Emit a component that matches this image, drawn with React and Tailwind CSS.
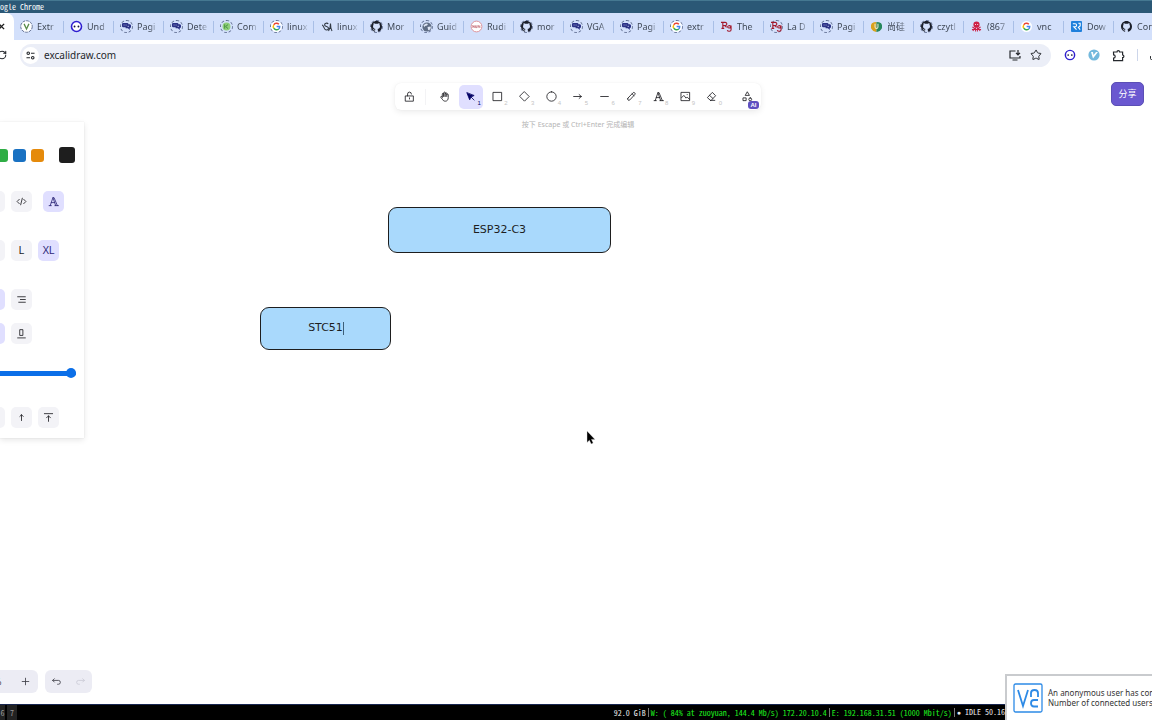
import clsx from "clsx";
import { BsGithub } from "react-icons/bs";
import { Star, Download, RotateCw } from "lucide-react";

const TABS = [
  { title: "Extr", icon: "v" },
  { title: "Und", icon: "eyes" },
  { title: "Pagi", icon: "chat", ring: true },
  { title: "Dete", icon: "chat", ring: true },
  { title: "Com", icon: "chip", ring: true },
  { title: "linux", icon: "google", ring: true },
  { title: "linux", icon: "script" },
  { title: "Mor", icon: "github", ring: true },
  { title: "Guid", icon: "globe", ring: true },
  { title: "Rudi", icon: "badge" },
  { title: "mor", icon: "github", ring: true },
  { title: "VGA", icon: "chat", ring: true },
  { title: "Pagi", icon: "chat", ring: true },
  { title: "extr", icon: "google", ring: true },
  { title: "The", icon: "pg" },
  { title: "La D", icon: "pg", ring: true },
  { title: "Pagi", icon: "chat", ring: true },
  { title: "尚硅", icon: "shield" },
  { title: "czytl", icon: "github", ring: true },
  { title: "(867", icon: "bug" },
  { title: "vnc", icon: "google" },
  { title: "Dow", icon: "down" },
  { title: "Com", icon: "github" },
];

const SANS = "font-['Noto_Sans','Noto_Sans_CJK_SC',sans-serif]";
const MONO = "font-['Noto_Sans_Mono_CJK_SC','Liberation_Mono',monospace]";

function Eyes({ className }) {
  return (
    <svg viewBox="0 0 14 14" className={className}>
      <circle cx="7" cy="7" r="5.4" fill="#fff" stroke="#2f1fd0" strokeWidth="1.7" />
      <circle cx="4.9" cy="7" r="1" fill="#14143c" />
      <circle cx="9.1" cy="7" r="1" fill="#14143c" />
    </svg>
  );
}

function Favicon({ name }) {
  switch (name) {
    case "v":
      return (
        <svg viewBox="0 0 14 14" className="size-[13px]">
          <circle cx="7" cy="7" r="6.2" fill="#fff" stroke="#5d6b8e" strokeDasharray="3 1" />
          <path d="M4.4 4.2 7 9.6l2.6-5.4" fill="none" stroke="#5a8c4a" strokeWidth="1.4" />
        </svg>
      );
    case "eyes":
      return <Eyes className="size-[13px]" />;
    case "chat":
      return (
        <svg viewBox="0 0 10 10" className="size-[9px]">
          <path d="M0 2.2Q0 1 1.4 1h4.4q1.4 0 1.4 1.4h1.6Q10 2.6 10 4v1.4Q10 7 8.6 7v1.8L6.6 7H4V5.8H1.4Q0 5.8 0 4.6Z" fill="#2b3185" />
          <path d="M1.8 3.4h1M4 3.4h1M6.2 4.8h1.6" stroke="#c9cef5" strokeWidth=".9" />
        </svg>
      );
    case "chip":
      return (
        <svg viewBox="0 0 10 10" className="size-[9px]">
          <circle cx="5" cy="5" r="4.4" fill="#8fcf7a" />
          <path d="M3 2.6v4.8M6.8 2.8 4 5l2.8 2.4" fill="none" stroke="#3f8a3a" strokeWidth="1" />
        </svg>
      );
    case "google":
      return (
        <svg viewBox="0 0 14 14" className="size-[11px]">
          <circle cx="7" cy="7" r="7" fill="#fff" />
          <g fill="none" strokeWidth="1.8">
            <path d="M3.5 4.9a4.1 4.1 0 0 1 6.5-.7" stroke="#ea4335" />
            <path d="M3.5 9.1a4.1 4.1 0 0 1 0-4.2" stroke="#fbbc05" />
            <path d="M9.8 10.1a4.1 4.1 0 0 1-6.3-1" stroke="#34a853" />
            <path d="M7.2 7h3.9a4.1 4.1 0 0 1-1.3 3.1" stroke="#4285f4" />
          </g>
        </svg>
      );
    case "script":
      return (
        <svg viewBox="0 0 12 12" className="size-3" fill="none" stroke="#303842" strokeWidth="1.1">
          <path d="M1 4c2 0 1.5 5 4.5 5 1.8 0 2.5-1.6 1.5-2.6C6 5.4 3.8 5.6 3.6 4 3.4 2.2 6.2 1.4 7.2 3M7.5 10c1.5-2 2-4 2-7.5 0 4 .3 5.5 1.5 7.5M8 7.5h2.5" />
        </svg>
      );
    case "github":
      return <BsGithub className="size-[11px] text-[#1b1f2a]" />;
    case "globe":
      return (
        <svg viewBox="0 0 10 10" className="size-[10px]">
          <circle cx="5" cy="5" r="4.6" fill="#5f6d84" />
          <path d="M1.5 3.2 4 1.5l2 .5-1 1.6-2 .4-.6 1.2ZM5.5 5l3-.6.4 1.6-1.8 2.4-1-.6Z" fill="#dfe6f5" />
        </svg>
      );
    case "badge":
      return (
        <svg viewBox="0 0 14 14" className="size-[13px]">
          <circle cx="7" cy="7" r="5.8" fill="#fff" stroke="#dc8d95" />
          <path d="M3 8.4V5.8l1.6 2.4V5.8M6 5.8v2.4h1.4V5.8M8.8 8.4V5.8l1.8 2.4V5.8" fill="none" stroke="#c0646e" strokeWidth=".8" />
        </svg>
      );
    case "pg":
      return (
        <svg viewBox="0 0 12 12" className="size-[11px]" fill="none" stroke="#a3182c" strokeWidth="1.2">
          <path d="M0 1.5h4.5c2.5 0 2.5 3.5 0 3.5H2M2 1.5v6M.5 8h3M4.5 5l1.5 2M11 6C9.5 4.5 7 5 7.2 6.6c.2 1.5 3.2 1.4 3.6-.4M11 5v4.5c0 2-3.5 2.2-4.2.5" />
        </svg>
      );
    case "shield":
      return (
        <svg viewBox="0 0 12 12" className="size-[11px]">
          <path d="M6 1v11A6 6 0 0 1 1 2.5Q3 1 6 1Z" fill="#d9a21c" />
          <path d="M6 1v11A6 6 0 0 0 11 2.5Q9 1 6 1Z" fill="#27875c" />
          <path d="M4.4 3v3.5a1.6 1.6 0 0 0 3.2 0V3" fill="none" stroke="#f3ead0" strokeWidth="1.1" />
        </svg>
      );
    case "bug":
      return (
        <svg viewBox="0 0 12 12" className="size-[11px]">
          <circle cx="6" cy="4" r="3.4" fill="#cf1f45" />
          <path d="M4.4 3.8h1M6.8 3.8h1" stroke="#fff" strokeWidth="1" />
          <path d="M1.5 6.5 4 8 2 11M10.5 6.5 8 8l2 3M5 7v4.5M7 7v4.5M1 9.2h10" fill="none" stroke="#cf1f45" strokeWidth="1.1" />
        </svg>
      );
    default:
      return (
        <svg viewBox="0 0 12 12" className="size-[11px]">
          <rect width="12" height="12" rx="1" fill="#1f80dc" />
          <path d="M2 3h2.5a1.5 1.5 0 0 1 0 3.2H3L6 9.5M8 2.5h2v3L8 7l2 2.5" fill="none" stroke="#fff" strokeWidth="1.2" />
        </svg>
      );
  }
}

function TabStrip() {
  return (
    <div className="flex h-[27px] shrink-0 overflow-hidden bg-[#d3e0fb]" role="tablist">
      <button className="w-[14px] shrink-0 rounded-tr-lg bg-white" role="tab" aria-selected="true" aria-label="Excalidraw">
        <svg viewBox="0 0 8 8" className="-ml-[2px] size-[7px] stroke-[#1f1f1f]" strokeWidth="1.5">
          <path d="M1 1l6 6M7 1L1 7" />
        </svg>
      </button>
      {TABS.map((tab, i) => (
        <button key={i} className="flex w-[50px] shrink-0 items-center gap-1 pl-[6px]" role="tab">
          <span
            className={clsx(
              "flex size-[13px] shrink-0 items-center justify-center rounded-full",
              tab.ring && "border border-dashed border-[#5d6b8e]"
            )}
          >
            <Favicon name={tab.icon} />
          </span>
          <span
            className={clsx(
              "w-[22px] overflow-hidden text-left text-[9px] whitespace-nowrap text-[#3f4856] [mask-image:linear-gradient(to_right,black_55%,transparent)]",
              SANS
            )}
          >
            {tab.title}
          </span>
          <span className="ml-auto h-3 w-px bg-[#a9bfe6]" />
        </button>
      ))}
    </div>
  );
}

function AddressBar() {
  return (
    <div className="flex h-[30px] shrink-0 items-center bg-white text-[#25282d]">
      <button className="-ml-[3px] w-[23px] shrink-0" aria-label="Reload">
        <RotateCw className="size-[10px]" strokeWidth={2.5} />
      </button>
      <div className="flex h-[23px] flex-1 items-center rounded-full bg-[#ebeef7] pr-[9px] pl-[2px]">
        <span className="flex size-[17px] items-center justify-center rounded-full bg-white">
          <svg viewBox="0 0 10 10" className="size-[9px]" fill="none" stroke="#25282d" strokeWidth="1.2">
            <circle cx="2.5" cy="2.5" r="1.4" />
            <path d="M5.5 2.5h4M.5 7.5h4" />
            <circle cx="7.5" cy="7.5" r="1.4" />
          </svg>
        </span>
        <input
          className={clsx("ml-[5px] min-w-0 flex-1 bg-transparent text-[10px] outline-none", SANS)}
          aria-label="Address"
          defaultValue="excalidraw.com"
        />
        <button aria-label="Install app">
          <svg viewBox="0 0 12 12" className="size-3" fill="none" stroke="#25282d" strokeWidth="1.2">
            <path d="M6.5 2H1v7h10V7M3.5 11h5M9 1v4.5M7 3.8l2 2 2-2" />
          </svg>
        </button>
        <button className="ml-[9px]" aria-label="Bookmark">
          <Star className="size-3" />
        </button>
      </div>
      <button className="ml-[13px]" aria-label="Extension">
        <Eyes className="size-3" />
      </button>
      <button className="ml-3" aria-label="Vimium">
        <svg viewBox="0 0 12 12" className="size-3">
          <circle cx="6" cy="6" r="5.6" fill="#74b9dd" />
          <path d="M3 3h2l.5 3L8 3h2L5 9.5Z" fill="#fff" />
        </svg>
      </button>
      <button className="ml-3" aria-label="Extensions">
        <svg viewBox="0 0 13 13" className="size-[13px]" fill="none" stroke="#25282d" strokeWidth="1.2">
          <path d="M1.5 3H5a1.3 1.3 0 0 1 2.6 0h3v3a1.3 1.3 0 0 1 0 2.6v3h-9V9a1.6 1.6 0 0 0 0-3.2Z" />
        </svg>
      </button>
      <span className="mr-[11px] ml-3 h-3 w-px bg-[#cdd6ea]" />
      <span className="w-[3px] overflow-hidden">
        <Download className="size-3" />
      </span>
    </div>
  );
}

const stroke = { fill: "none", stroke: "currentColor", strokeWidth: 1.5, strokeLinecap: "round", strokeLinejoin: "round" };

const FONT_ICON = "M2 17.5h4M4 17.5 9 3h2l6 14.5M9 3l5 14.5M6 12h6M12.5 17.5H19";

const TOOLS = [
  { label: "Hand", path: "M6 11V5.5a1.3 1.3 0 0 1 2.7 0V10M8.7 9.5V3.3a1.3 1.3 0 0 1 2.7 0V10M11.4 4.5a1.3 1.3 0 0 1 2.7 0V10M14.1 6.8a1.3 1.3 0 0 1 2.7 0V12c0 4-2 6.5-5.4 6.5-3 0-4.2-1.5-5.4-3.6L3.2 11.5c-.5-1.5 1-2.3 2-1.2L6 11.5" },
  { label: "Selection", key: "1", path: "M3.5 3.5l5 12.5 2.2-5L16 8.5Zm7.5 7.5 5.5 5.5", fill: true, active: true },
  { label: "Rectangle", key: "2", path: "M2.5 2.5h15v15h-15Z" },
  { label: "Diamond", key: "3", path: "M10 1.5l8.5 8.5-8.5 8.5L1.5 10Z" },
  { label: "Ellipse", key: "4", path: "M10 1.5a8.5 8.5 0 1 1 0 17 8.5 8.5 0 0 1 0-17Z" },
  { label: "Arrow", key: "5", path: "M3 10h14M13 6.5l4 3.5-4 3.5" },
  { label: "Line", key: "6", path: "M3 10h14" },
  { label: "Draw", key: "7", path: "M3.5 13 12.5 3.5a2.3 2.3 0 0 1 3.5 3L7 16.2a2.3 2.3 0 0 1-3.5-3.2ZM11 5l3.5 3.5" },
  { label: "Text", key: "8", path: FONT_ICON },
  { label: "Image", key: "9", path: "M2.5 2.5h15v15h-15ZM3 12l4-4 4 5 2-2 4 4M13 6.5h.1" },
  { label: "Eraser", key: "0", path: "M8 17 2.5 12l9-9.5 6 6L9.5 17ZM6.5 8l6 5.5M8 17h8" },
];

function Icon({ d, fill }) {
  return (
    <svg viewBox="0 0 20 20" className="size-[11px]" {...stroke} fill={fill ? "currentColor" : "none"}>
      <path d={d} />
    </svg>
  );
}

function Toolbar() {
  return (
    <div className="mt-[13px] flex h-[27px] w-[366px] items-center rounded-md bg-white px-[2px] text-[#1b1b1f] shadow-[0_2px_6px_rgba(0,0,0,0.08),0_0_1px_rgba(0,0,0,0.08)]">
      <button className="flex size-6 items-center justify-center" aria-label="Lock">
        <Icon d="M3 9h14v9.5H3ZM6.5 9V5.5a3.5 3.5 0 0 1 7 0M10 12.5v2" />
      </button>
      <span className="ml-1 h-4 w-px bg-[#f3f3f5]" />
      <div className="mr-[11px] ml-[6px] flex flex-1 justify-between">
        {TOOLS.map((tool) => (
          <button
            key={tool.label}
            aria-label={tool.label}
            className={clsx(
              "relative flex size-6 items-center justify-center rounded-[5px]",
              tool.active && "bg-[#e0dfff] text-[#030064]"
            )}
          >
            <Icon d={tool.path} fill={tool.fill} />
            {tool.key && (
              <span
                className={clsx(
                  "absolute right-[2px] bottom-[2px] font-['Liberation_Sans',sans-serif] text-[6px] leading-[8px]",
                  tool.active ? "text-[#030064]" : "text-[#c4c4c4]"
                )}
              >
                {tool.key}
              </span>
            )}
          </button>
        ))}
      </div>
      <button className="relative flex size-6 items-center justify-center" aria-label="More tools">
        <Icon d="M10 2l3.5 6h-7ZM2.5 12.5h5v5h-5ZM15 12.5a2.6 2.6 0 1 1 0 5.2 2.6 2.6 0 0 1 0-5.2Z" />
        <span className="absolute right-0 bottom-0 h-2 w-[11px] rounded-[3px] bg-[#5f50c0] text-center font-['Liberation_Sans',sans-serif] text-[6px] leading-[8px] font-bold text-white">
          AI
        </span>
      </button>
    </div>
  );
}

function PanelButton({ active, label, className, children }) {
  return (
    <button
      aria-label={label}
      className={clsx(
        "flex size-[21px] shrink-0 items-center justify-center rounded-[5px]",
        active ? "bg-[#e0dfff] text-[#2c2678]" : "bg-[#f3f3f7] text-[#1b1b1f]",
        className
      )}
    >
      {children}
    </button>
  );
}

function StylePanel() {
  return (
    <aside className="mt-[52px] overflow-hidden bg-white pt-[25px] pb-[10px] shadow-[0_2px_6px_rgba(0,0,0,0.1),0_0_1px_rgba(0,0,0,0.12)]">
      <div className="-ml-[5px] flex items-center gap-[5px]">
        <button className="size-[13px] rounded-[3px] bg-[#2fad45]" aria-label="Green" />
        <button className="size-[13px] rounded-[3px] bg-[#1971c2]" aria-label="Blue" />
        <button className="size-[13px] rounded-[3px] bg-[#e58a0b]" aria-label="Orange" />
        <button className="ml-[10px] size-4 rounded-[3px] bg-[#1e1e1e]" aria-label="Black" />
      </div>

      <div className="mt-7 -ml-4 flex gap-[6px]">
        <PanelButton label="Normal" />
        <PanelButton label="Code">
          <Icon d="M6 6l-4 4 4 4M14 6l4 4-4 4M11.5 4l-3 12" />
        </PanelButton>
        <PanelButton label="Font picker" active className="ml-[5px]">
          <Icon d={FONT_ICON} />
        </PanelButton>
      </div>

      <div className="mt-7 -ml-4 flex gap-[6px] font-['Liberation_Sans',sans-serif] text-[10px]">
        <PanelButton label="Medium" />
        <PanelButton label="Large">L</PanelButton>
        <PanelButton label="Extra large" active>XL</PanelButton>
      </div>

      <div className="mt-7 -ml-4 flex gap-[6px]">
        <PanelButton label="Center" active />
        <PanelButton label="Right">
          <Icon d="M3 5h14M8 10h9M5 15h12" />
        </PanelButton>
      </div>
      <div className="mt-[13px] -ml-4 flex gap-[6px]">
        <PanelButton label="Middle" active />
        <PanelButton label="Bottom">
          <Icon d="M3 18h14M7.5 3h5v10.5h-5Z" />
        </PanelButton>
      </div>

      <div className="mt-[22px] -ml-4 flex h-[14px] items-center">
        <input
          type="range"
          aria-label="Opacity"
          defaultValue={100}
          className="h-[5px] w-[92px] appearance-none rounded-full bg-[#0b6fe8] [&::-webkit-slider-thumb]:size-[10px] [&::-webkit-slider-thumb]:appearance-none [&::-webkit-slider-thumb]:rounded-full [&::-webkit-slider-thumb]:bg-[#0b6fe8]"
        />
      </div>

      <div className="mt-[27px] -ml-4 flex gap-[6px]">
        <PanelButton label="Send backward" />
        <PanelButton label="Bring forward">
          <Icon d="M10 15.5V5M7 8l3-3 3 3" />
        </PanelButton>
        <PanelButton label="Bring to front">
          <Icon d="M10 17V7M6.5 10.5 10 7l3.5 3.5M2.5 3h15" />
        </PanelButton>
      </div>
    </aside>
  );
}

function Drawing() {
  const box =
    "absolute flex items-center justify-center rounded-[9px] border border-[#1e1e1e] bg-[#a9d9fc] font-['DejaVu_Sans',sans-serif] text-[11px] text-[#1e1e1e]";
  return (
    <>
      <div className={clsx(box, "top-[137px] left-[388px] h-[46px] w-[223px]")}>ESP32-C3</div>
      <div className={clsx(box, "top-[237px] left-[260px] h-[43px] w-[131px]")}>
        <input className="w-9 bg-transparent text-center outline-none" aria-label="Shape text" defaultValue="STC51" />
        <span className="-ml-px h-[13px] w-px bg-[#3d5f78]" />
      </div>
      <svg viewBox="0 0 10 15" className="absolute top-[360px] left-[586px] h-[15px] w-[10px]">
        <path d="M1 1v11.5l2.4-2.3L5.2 14l2-1-1.7-3.6H9Z" fill="#000" stroke="#ddd" strokeWidth=".4" />
      </svg>
    </>
  );
}

function Canvas() {
  return (
    <main className={clsx("relative flex flex-1 flex-col justify-between overflow-hidden bg-white", SANS)}>
      <Drawing />
      <div className="grid grid-cols-[84px_1fr_80px] items-start">
        <StylePanel />
        <div className="flex flex-col items-center">
          <Toolbar />
          <p className="mt-[9px] text-[7px] leading-[12px] text-[#b4b4b4]">
            按下 Escape 或 Ctrl+Enter 完成编辑
          </p>
        </div>
        <div className="mt-3 mr-2 flex justify-end">
          <button className="h-6 w-[33px] rounded-[5px] border border-[#5b4fb5] bg-[#6a58d0] text-[9px] text-white">分享</button>
        </div>
      </div>

      <footer className="mb-[11px] flex gap-[7px] text-[#3d3d45]">
        <div className="flex h-[23px] w-[38px] items-center justify-between overflow-hidden rounded-r-md bg-[#ececf4] pr-[7px]">
          <span className="-ml-[6px] text-[9px]">%</span>
          <button aria-label="Zoom in">
            <Icon d="M10 4v12M4 10h12" />
          </button>
        </div>
        <div className="flex h-[23px] w-[47px] items-center justify-between rounded-md bg-[#ececf4] px-[6px]">
          <button aria-label="Undo">
            <Icon d="M6 11 3 8l3-3M3 8h10.5a3.5 3.5 0 0 1 0 7H12" />
          </button>
          <button className="text-[#c9c9d4]" aria-label="Redo">
            <Icon d="M14 11l3-3-3-3M17 8H6.5a3.5 3.5 0 0 0 0 7H8" />
          </button>
        </div>
      </footer>
    </main>
  );
}

function StatusBar() {
  return (
    <div className={clsx("flex h-4 shrink-0 items-center border-t border-[#17254f] bg-black text-[8px] leading-[15px] whitespace-nowrap text-[#e8e8e8]", MONO)}>
      <button className="h-full w-[5px] bg-[#222] text-[#999]">6</button>
      <button className="ml-[2px] h-full w-[10px] bg-[#222] text-[#999]">7</button>
      <div className="mr-[147px] ml-auto flex items-center gap-[2px]">
        <span>92.0 GiB</span>
        <span className="h-[9px] w-px bg-[#777]" />
        <span className="text-[#1ff01f]">W: ( 84% at zuoyuan, 144.4 Mb/s) 172.20.10.4</span>
        <span className="h-[9px] w-px bg-[#777]" />
        <span className="text-[#1ff01f]">E: 192.168.31.51 (1000 Mbit/s)</span>
        <span className="h-[9px] w-px bg-[#777]" />
        <span>
          <span className="font-['Liberation_Mono',monospace] text-[7px]">●</span> IDLE 50.16
        </span>
      </div>
    </div>
  );
}

function Notification() {
  return (
    <div className="absolute right-0 bottom-0 flex h-[46px] w-[147px] items-center border-2 border-r-0 border-b-0 border-[#c9cbce] bg-white pl-[6px]">
      <svg viewBox="0 0 30 30" className="size-[30px] shrink-0" fill="none" stroke="#2d8ae6" strokeWidth="1.8">
        <rect x="1" y="1" width="28" height="28" rx="1.5" fill="#fff" strokeWidth="1.3" />
        <path d="M5 7l5 16 5-16M18 14v-4c0-4 7-4 7 0v4M25 17h-4c-4 0-4 6.5 0 6.5h4" />
      </svg>
      <p className={clsx("ml-[5px] text-[8px] leading-[10px] whitespace-nowrap text-[#333]", SANS)}>
        An anonymous user has con
        <br />
        Number of connected users
      </p>
    </div>
  );
}

export default function App() {
  return (
    <div className="relative flex h-screen flex-col overflow-hidden">
      <div className={clsx("flex h-[13px] shrink-0 items-center border-t border-[#457891] bg-[#2b5876] text-[8px] leading-[12px] text-white", MONO)}>
        ogle Chrome
      </div>
      <TabStrip />
      <AddressBar />
      <Canvas />
      <StatusBar />
      <Notification />
    </div>
  );
}
